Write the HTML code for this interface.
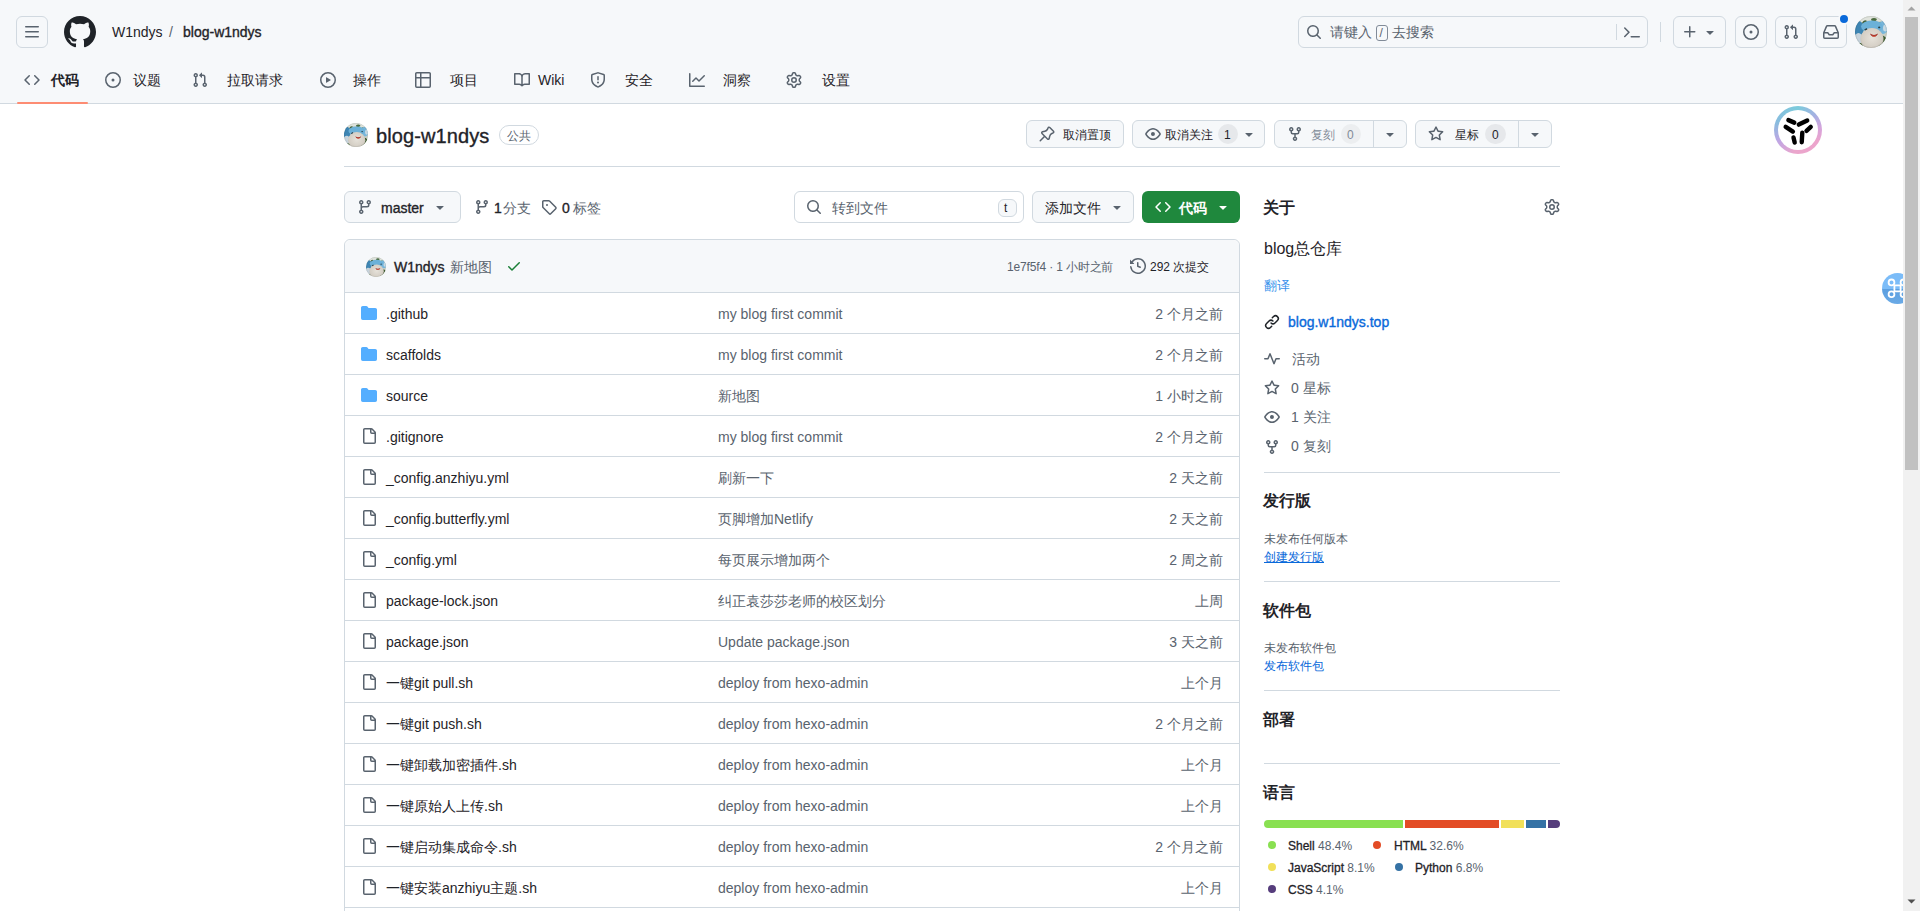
<!DOCTYPE html>
<html><head><meta charset="utf-8"><title>blog-w1ndys</title>
<style>
html,body{margin:0;padding:0;width:1920px;height:911px;overflow:hidden;background:#fff;}
body{font-family:"Liberation Sans",sans-serif;position:relative;-webkit-font-smoothing:antialiased;}
.b{position:absolute;box-sizing:content-box;}
.t{position:absolute;white-space:nowrap;margin-top:1px;}
.ic{position:absolute;overflow:visible;}
</style></head><body>
<div class="b" style="left:0px;top:0px;width:1903px;height:103px;background:#f6f8fa;border-bottom:1px solid #d1d9e0"></div>
<div class="b" style="left:16px;top:16px;width:30px;height:30px;border:1px solid #d1d9e0;border-radius:6px"></div>
<svg class="ic" style="left:24px;top:24px;width:16px;height:16px;fill:#59636e;" viewBox="0 0 16 16"><path d="M1 2.750A.75.75 0 0 1 1.750 2h12.500a.75.75 0 0 1 0 1.500H1.750A.75.75 0 0 1 1 2.750Zm0 5A.75.75 0 0 1 1.750 7h12.500a.75.75 0 0 1 0 1.500H1.750A.75.75 0 0 1 1 7.750ZM1.750 12h12.500a.75.75 0 0 1 0 1.500H1.750a.75.75 0 0 1 0-1.500Z"/></svg>
<svg class="ic" style="left:64px;top:16px;width:32px;height:32px;fill:#1f2328;" viewBox="1 1 22 22"><path d="M12 1C5.923 1 1 5.923 1 12c0 4.867 3.149 8.979 7.521 10.436.550.096.756-.233.756-.522 0-.262-.013-1.128-.013-2.049-2.764.509-3.479-.674-3.699-1.292-.124-.317-.660-1.293-1.128-1.554-.385-.207-.936-.715-.014-.729.866-.014 1.485.797 1.691 1.128.990 1.663 2.571 1.196 3.204.907.096-.715.385-1.196.701-1.471-2.448-.275-5.005-1.224-5.005-5.432 0-1.196.426-2.186 1.128-2.956-.110-.275-.495-1.402.110-2.915 0 0 .921-.288 3.024 1.128a10.193 10.193 0 0 1 2.750-.371c.936 0 1.871.123 2.750.371 2.104-1.430 3.025-1.128 3.025-1.128.605 1.513.220 2.640.110 2.915.701.770 1.127 1.747 1.127 2.956 0 4.222-2.571 5.157-5.019 5.432.399.344.743 1.004.743 2.035 0 1.471-.014 2.654-.014 3.025 0 .289.206.632.756.522C19.851 20.979 23 16.854 23 12c0-6.077-4.922-11-11-11Z"/></svg>
<div class="t" style="left:112px;top:21px;font-size:14px;color:#1f2328;font-weight:400;line-height:20px">W1ndys</div>
<div class="t" style="left:169px;top:21px;font-size:14px;color:#59636e;font-weight:400;line-height:20px">/</div>
<div class="t" style="left:183px;top:21px;font-size:14px;color:#1f2328;font-weight:400;line-height:20px;-webkit-text-stroke:0.35px #1f2328">blog-w1ndys</div>
<div class="b" style="left:1298px;top:16px;width:348px;height:30px;border:1px solid #d1d9e0;border-radius:6px;background:#f6f8fa"></div>
<svg class="ic" style="left:1306px;top:24px;width:16px;height:16px;fill:#59636e;" viewBox="0 0 16 16"><path d="M10.68 11.74a6 6 0 0 1-7.922-8.982 6 6 0 0 1 8.982 7.922l3.04 3.04a.749.749 0 0 1-.326 1.275.749.749 0 0 1-.734-.215ZM11.5 7a4.499 4.499 0 1 0-8.997 0A4.499 4.499 0 0 0 11.5 7Z"/></svg>
<div class="t" style="left:1330px;top:21px;font-size:14px;color:#59636e;font-weight:400;line-height:20px">请键入</div>
<div class="b" style="left:1376px;top:25px;width:10px;height:14px;border:1px solid #818b98;border-radius:3px"></div>
<div class="t" style="left:1379.5px;top:24px;font-size:12px;color:#59636e;font-weight:400;line-height:16px">/</div>
<div class="t" style="left:1392px;top:21px;font-size:14px;color:#59636e;font-weight:400;line-height:20px">去搜索</div>
<div class="b" style="left:1616px;top:24px;width:1px;height:16px;background:#d1d9e0"></div>
<svg class="ic" style="left:1624px;top:24px;width:16px;height:16px;fill:#59636e;" viewBox="0 0 16 16"><path d="M.22 2.97a.75.75 0 0 1 1.06 0l4.25 4.25a.75.75 0 0 1 0 1.06l-4.25 4.25a.749.749 0 0 1-1.275-.326.749.749 0 0 1 .215-.734L3.94 7.75.22 4.03a.75.75 0 0 1 0-1.06ZM6.5 12.25a.75.75 0 0 1 .75-.75h8a.75.75 0 0 1 0 1.5h-8a.75.75 0 0 1-.75-.75Z" transform="translate(0,0.5)"/></svg>
<div class="b" style="left:1660px;top:22px;width:1px;height:20px;background:#d1d9e0"></div>
<div class="b" style="left:1673px;top:16px;width:51px;height:30px;border:1px solid #d1d9e0;border-radius:6px"></div>
<svg class="ic" style="left:1682px;top:24px;width:16px;height:16px;fill:#59636e;" viewBox="0 0 16 16"><path d="M7.75 2a.75.75 0 0 1 .75.75V7h4.25a.75.75 0 0 1 0 1.5H8.5v4.25a.75.75 0 0 1-1.5 0V8.5H2.75a.75.75 0 0 1 0-1.5H7V2.75A.75.75 0 0 1 7.75 2Z"/></svg>
<svg class="ic" style="left:1702px;top:24px;width:16px;height:16px;fill:#59636e;" viewBox="0 0 16 16"><path d="m4.427 7.427 3.396 3.396a.25.25 0 0 0 .354 0l3.396-3.396A.25.25 0 0 0 11.396 7H4.604a.25.25 0 0 0-.177.427Z"/></svg>
<div class="b" style="left:1735px;top:16px;width:30px;height:30px;border:1px solid #d1d9e0;border-radius:6px"></div>
<svg class="ic" style="left:1743px;top:24px;width:16px;height:16px;fill:#59636e;" viewBox="0 0 16 16"><path d="M8 9.5a1.5 1.5 0 1 0 0-3 1.5 1.5 0 0 0 0 3Z"/><path d="M8 0a8 8 0 1 1 0 16A8 8 0 0 1 8 0ZM1.5 8a6.5 6.5 0 1 0 13 0 6.5 6.5 0 0 0-13 0Z"/></svg>
<div class="b" style="left:1775px;top:16px;width:30px;height:30px;border:1px solid #d1d9e0;border-radius:6px"></div>
<svg class="ic" style="left:1783px;top:24px;width:16px;height:16px;fill:#59636e;" viewBox="0 0 16 16"><path d="M1.5 3.25a2.25 2.25 0 1 1 3 2.122v5.256a2.251 2.251 0 1 1-1.5 0V5.372A2.25 2.25 0 0 1 1.5 3.25Zm5.677-.177L9.573.677A.25.25 0 0 1 10 .854V2.5h1A2.5 2.5 0 0 1 13.5 5v5.628a2.251 2.251 0 1 1-1.5 0V5a1 1 0 0 0-1-1h-1v1.646a.25.25 0 0 1-.427.177L7.177 3.427a.25.25 0 0 1 0-.354ZM3.75 2.5a.75.75 0 1 0 0 1.5.75.75 0 0 0 0-1.5Zm0 9.5a.75.75 0 1 0 0 1.5.75.75 0 0 0 0-1.5Zm8.25.75a.75.75 0 1 0 1.5 0 .75.75 0 0 0-1.5 0Z"/></svg>
<div class="b" style="left:1815px;top:16px;width:30px;height:30px;border:1px solid #d1d9e0;border-radius:6px"></div>
<svg class="ic" style="left:1823px;top:24px;width:16px;height:16px;fill:#59636e;" viewBox="0 0 16 16"><path d="M2.8 2.06A1.75 1.75 0 0 1 4.41 1h7.18c.7 0 1.333.417 1.61 1.06l2.74 6.395c.04.093.06.194.06.295v4.5A1.75 1.75 0 0 1 14.25 15H1.75A1.75 1.75 0 0 1 0 13.25v-4.5c0-.101.02-.202.06-.295Zm1.61.44a.25.25 0 0 0-.23.152L1.887 8H4.75a.75.75 0 0 1 .6.3L6.625 10h2.75l1.275-1.7a.75.75 0 0 1 .6-.3h2.863L11.82 2.652a.25.25 0 0 0-.23-.152Zm10.09 7h-2.875l-1.275 1.7a.75.75 0 0 1-.6.3h-3.5a.75.75 0 0 1-.6-.3L4.375 9.5H1.5v3.75c0 .138.112.25.25.25h12.5a.25.25 0 0 0 .25-.25Z"/></svg>
<div class="b" style="left:1840px;top:15px;width:8px;height:8px;background:#0969da;border-radius:50%;border:2px solid #f6f8fa;left:1838px;top:13px"></div>
<svg width="0" height="0" style="position:absolute"><defs><clipPath id="avc"><circle cx="16" cy="16" r="16"/></clipPath>
<radialGradient id="avface" cx="0.5" cy="0.45" r="0.6"><stop offset="0" stop-color="#e6e2da"/><stop offset="0.75" stop-color="#d4cec4"/><stop offset="1" stop-color="#b8b1a6"/></radialGradient>
<symbol id="av" viewBox="0 0 32 32"><g clip-path="url(#avc)">
<rect width="32" height="32" fill="#c9d0c6"/>
<path d="M0 0H32V10C27 6 22 4 16 4.5C9 4 4 7 0 10Z" fill="#dfe3dc"/>
<path d="M7 7Q9 3 12 5Q11 8 8 9Z" fill="#3f5e36"/><path d="M16 3Q19 1 22 3Q21 6 17 6Z" fill="#4a6a3e"/><path d="M24 6Q27 5 28 8L25 9Z" fill="#557a48"/>
<ellipse cx="3.5" cy="12.5" rx="5.5" ry="7.5" fill="#3d85b3"/>
<ellipse cx="28" cy="11.5" rx="5" ry="6.5" fill="#78b6da"/>
<ellipse cx="30.5" cy="12" rx="2.5" ry="3.5" fill="#c9dbe4"/>
<ellipse cx="17" cy="10.5" rx="11" ry="6" fill="#6cb1d8"/>
<ellipse cx="27" cy="26" rx="5" ry="6.5" fill="#3d5c2e"/>
<ellipse cx="3.5" cy="22.5" rx="4" ry="5.5" fill="#c6d3dc"/>
<ellipse cx="5" cy="30" rx="3" ry="3" fill="#40602f"/>
<ellipse cx="17" cy="23" rx="11.5" ry="11" fill="url(#avface)"/>
<path d="M15 17.6 Q19 20.2 23 17.6 Q22.2 20.6 19 20.9 Q15.8 20.6 15 17.6Z" fill="#9e2a22"/>
<path d="M16.3 19.2 Q19 20.5 21.7 19.2 Q20.4 20.7 19 20.7Q17.6 20.7 16.3 19.2Z" fill="#e46c52"/>
<path d="M9.2 13.6L11.6 11.9L12.4 13.4L10.2 14.6Z" fill="#2a4048"/><ellipse cx="24.2" cy="11.4" rx="1.1" ry="0.9" fill="#2a4048"/>
</g><circle cx="16" cy="16" r="15.6" fill="none" stroke="rgba(31,35,40,0.12)" stroke-width="0.8"/></symbol></defs></svg>
<svg class="ic" style="left:1855px;top:16px;width:32px;height:32px" viewBox="0 0 32 32"><use href="#av"/></svg>
<svg class="ic" style="left:24px;top:72px;width:16px;height:16px;fill:#59636e;" viewBox="0 0 16 16"><path d="m11.28 3.22 4.25 4.25a.75.75 0 0 1 0 1.06l-4.25 4.25a.749.749 0 0 1-1.275-.326.749.749 0 0 1 .215-.734L13.94 8l-3.72-3.72a.749.749 0 0 1 .326-1.275.749.749 0 0 1 .734.215Zm-6.56 0a.751.751 0 0 1 1.042.018.751.751 0 0 1 .018 1.042L2.06 8l3.72 3.72a.749.749 0 0 1-.326 1.275.749.749 0 0 1-.734-.215L.47 8.53a.75.75 0 0 1 0-1.06Z"/></svg>
<div class="t" style="left:51px;top:69px;font-size:14px;color:#1f2328;font-weight:600;line-height:20px">代码</div>
<svg class="ic" style="left:105px;top:72px;width:16px;height:16px;fill:#59636e;" viewBox="0 0 16 16"><path d="M8 9.5a1.5 1.5 0 1 0 0-3 1.5 1.5 0 0 0 0 3Z"/><path d="M8 0a8 8 0 1 1 0 16A8 8 0 0 1 8 0ZM1.5 8a6.5 6.5 0 1 0 13 0 6.5 6.5 0 0 0-13 0Z"/></svg>
<div class="t" style="left:133px;top:69px;font-size:14px;color:#1f2328;font-weight:400;line-height:20px">议题</div>
<svg class="ic" style="left:192px;top:72px;width:16px;height:16px;fill:#59636e;" viewBox="0 0 16 16"><path d="M1.5 3.25a2.25 2.25 0 1 1 3 2.122v5.256a2.251 2.251 0 1 1-1.5 0V5.372A2.25 2.25 0 0 1 1.5 3.25Zm5.677-.177L9.573.677A.25.25 0 0 1 10 .854V2.5h1A2.5 2.5 0 0 1 13.5 5v5.628a2.251 2.251 0 1 1-1.5 0V5a1 1 0 0 0-1-1h-1v1.646a.25.25 0 0 1-.427.177L7.177 3.427a.25.25 0 0 1 0-.354ZM3.75 2.5a.75.75 0 1 0 0 1.5.75.75 0 0 0 0-1.5Zm0 9.5a.75.75 0 1 0 0 1.5.75.75 0 0 0 0-1.5Zm8.25.75a.75.75 0 1 0 1.5 0 .75.75 0 0 0-1.5 0Z"/></svg>
<div class="t" style="left:227px;top:69px;font-size:14px;color:#1f2328;font-weight:400;line-height:20px">拉取请求</div>
<svg class="ic" style="left:320px;top:72px;width:16px;height:16px;fill:#59636e;" viewBox="0 0 16 16"><path d="M8 0a8 8 0 1 1 0 16A8 8 0 0 1 8 0ZM1.5 8a6.5 6.5 0 1 0 13 0 6.5 6.5 0 0 0-13 0Zm4.879-2.773 4.264 2.559a.25.25 0 0 1 0 .428l-4.264 2.559A.25.25 0 0 1 6 10.559V5.442a.25.25 0 0 1 .379-.215Z"/></svg>
<div class="t" style="left:353px;top:69px;font-size:14px;color:#1f2328;font-weight:400;line-height:20px">操作</div>
<svg class="ic" style="left:415px;top:72px;width:16px;height:16px;fill:#59636e;" viewBox="0 0 16 16"><path d="M0 1.75C0 .784.784 0 1.75 0h12.5C15.216 0 16 .784 16 1.75v12.5A1.75 1.75 0 0 1 14.25 16H1.75A1.75 1.75 0 0 1 0 14.25ZM6.5 6.5v8h7.75a.25.25 0 0 0 .25-.25V6.5Zm8-1.5V1.750a.25.25 0 0 0-.25-.25H6.5V5Zm-13 1.5v7.75c0 .138.112.25.25.25H5v-8ZM5 5V1.5H1.75a.25.25 0 0 0-.25.25V5Z"/></svg>
<div class="t" style="left:450px;top:69px;font-size:14px;color:#1f2328;font-weight:400;line-height:20px">项目</div>
<svg class="ic" style="left:514px;top:72px;width:16px;height:16px;fill:#59636e;" viewBox="0 0 16 16"><path d="M0 1.75A.75.75 0 0 1 .75 1h4.253c1.227 0 2.317.59 3 1.501A3.743 3.743 0 0 1 11.006 1h4.245a.75.75 0 0 1 .75.75v10.5a.75.75 0 0 1-.75.75h-4.507a2.25 2.25 0 0 0-1.591.659l-.622.621a.75.75 0 0 1-1.06 0l-.622-.621A2.25 2.25 0 0 0 5.258 13H.75a.75.75 0 0 1-.75-.75Zm7.251 10.324.004-5.073-.002-2.253A2.25 2.25 0 0 0 5.003 2.5H1.5v9h3.757a3.75 3.75 0 0 1 1.994.574ZM8.755 4.75l-.004 7.322a3.752 3.752 0 0 1 1.992-.572H14.5v-9h-3.495a2.25 2.250 0 0 0-2.250 2.25Z"/></svg>
<div class="t" style="left:538px;top:69px;font-size:14px;color:#1f2328;font-weight:400;line-height:20px">Wiki</div>
<svg class="ic" style="left:590px;top:72px;width:16px;height:16px;fill:#59636e;" viewBox="0 0 16 16"><path d="M7.467.133a1.748 1.748 0 0 1 1.066 0l5.25 1.68A1.75 1.75 0 0 1 15 3.48V7c0 1.566-.32 3.182-1.303 4.682-.983 1.498-2.585 2.813-5.032 3.855a1.697 1.697 0 0 1-1.33 0c-2.447-1.042-4.049-2.357-5.032-3.855C1.32 10.182 1 8.566 1 7V3.48a1.755 1.755 0 0 1 1.217-1.667Zm.61 1.429a.25.25 0 0 0-.153 0l-5.25 1.68a.25.25 0 0 0-.174.238V7c0 1.358.275 2.666 1.057 3.86.784 1.194 2.121 2.34 4.366 3.297a.196.196 0 0 0 .154 0c2.245-.956 3.582-2.104 4.366-3.298C13.225 9.666 13.5 8.36 13.5 7V3.48a.251.251 0 0 0-.174-.237l-5.25-1.68ZM8.750 4.75v3a.75.75 0 0 1-1.5 0v-3a.75.75 0 0 1 1.5 0ZM9 10.5a1 1 0 1 1-2 0 1 1 0 0 1 2 0Z"/></svg>
<div class="t" style="left:625px;top:69px;font-size:14px;color:#1f2328;font-weight:400;line-height:20px">安全</div>
<svg class="ic" style="left:689px;top:72px;width:16px;height:16px;fill:#59636e;" viewBox="0 0 16 16"><path d="M1.5 1.75V13.5h13.75a.75.75 0 0 1 0 1.5H.75a.75.75 0 0 1-.75-.75V1.75a.75.75 0 0 1 1.5 0Zm14.28 2.53-5.25 5.25a.75.75 0 0 1-1.06 0L7 7.060 4.28 9.78a.751.751 0 0 1-1.042-.018.751.751 0 0 1-.018-1.042l3.25-3.25a.75.75 0 0 1 1.060 0L10 7.94l4.72-4.72a.751.751 0 0 1 1.042.018.751.751 0 0 1 .018 1.042Z"/></svg>
<div class="t" style="left:723px;top:69px;font-size:14px;color:#1f2328;font-weight:400;line-height:20px">洞察</div>
<svg class="ic" style="left:786px;top:72px;width:16px;height:16px;fill:#59636e;" viewBox="0 0 16 16"><path d="M8 0a8.2 8.2 0 0 1 .701.031C9.444.095 9.99.645 10.16 1.29l.288 1.107c.018.066.079.158.212.224.231.114.454.243.668.386.123.082.233.09.299.071l1.103-.303c.644-.176 1.392.021 1.82.63.27.385.506.792.704 1.218.315.675.111 1.422-.364 1.891l-.814.806c-.049.048-.098.147-.088.294.016.257.016.515 0 .772-.01.147.038.246.088.294l.814.806c.475.469.679 1.216.364 1.891a7.977 7.977 0 0 1-.704 1.217c-.428.61-1.176.807-1.82.63l-1.102-.302c-.067-.019-.177-.011-.3.071a5.909 5.909 0 0 1-.668.386c-.133.066-.194.158-.211.224l-.29 1.106c-.168.646-.715 1.196-1.458 1.26a8.006 8.006 0 0 1-1.402 0c-.743-.064-1.289-.614-1.458-1.26l-.289-1.106c-.018-.066-.079-.158-.212-.224a5.738 5.738 0 0 1-.668-.386c-.123-.082-.233-.09-.299-.071l-1.103.303c-.644.176-1.392-.021-1.82-.63a8.12 8.120 0 0 1-.704-1.218c-.315-.675-.111-1.422.363-1.891l.815-.806c.05-.048.098-.147.088-.294a6.214 6.214 0 0 1 0-.772c.01-.147-.038-.246-.088-.294l-.815-.806C.635 6.045.431 5.298.746 4.623a7.92 7.92 0 0 1 .704-1.217c.428-.61 1.176-.807 1.82-.63l1.102.302c.067.019.177.011.3-.071.214-.143.437-.272.668-.386.133-.066.194-.158.211-.224l.29-1.106C6.009.645 6.556.095 7.299.03 7.53.01 7.764 0 8 0Zm-.571 1.525c-.036.003-.108.036-.137.146l-.289 1.105c-.147.561-.549.967-.998 1.189-.173.086-.34.183-.5.29-.417.278-.97.423-1.529.27l-1.103-.303c-.109-.03-.175.016-.195.045-.22.312-.412.644-.573.99-.014.031-.021.11.059.19l.815.806c.411.406.562.957.53 1.456a4.709 4.709 0 0 0 0 .582c.032.499-.119 1.05-.53 1.456l-.815.806c-.081.08-.073.159-.059.19.162.346.353.677.573.989.02.03.085.076.195.046l1.102-.303c.56-.153 1.113-.008 1.53.27.161.107.328.204.501.29.447.222.85.629.997 1.189l.289 1.105c.029.109.101.143.137.146a6.6 6.6 0 0 0 1.142 0c.036-.003.108-.036.137-.146l.289-1.105c.147-.561.549-.967.998-1.189.173-.086.34-.183.5-.29.417-.278.97-.423 1.529-.27l1.103.303c.109.029.175-.016.195-.045.22-.313.411-.644.573-.99.014-.031.021-.11-.059-.19l-.815-.806c-.411-.406-.562-.957-.53-1.456a4.709 4.709 0 0 0 0-.582c-.032-.499.119-1.05.53-1.456l.815-.806c.081-.08.073-.159.059-.19a6.464 6.464 0 0 0-.573-.989c-.02-.03-.085-.076-.195-.046l-1.102.303c-.56.153-1.113.008-1.53-.27a4.44 4.44 0 0 0-.501-.29c-.447-.222-.85-.629-.997-1.189l-.289-1.105c-.029-.11-.101-.143-.137-.146a6.6 6.6 0 0 0-1.142 0ZM11 8a3 3 0 1 1-6 0 3 3 0 0 1 6 0ZM9.5 8a1.5 1.5 0 1 0-3.001.001A1.5 1.5 0 0 0 9.5 8Z"/></svg>
<div class="t" style="left:822px;top:69px;font-size:14px;color:#1f2328;font-weight:400;line-height:20px">设置</div>
<div class="b" style="left:17px;top:102px;width:71px;height:2px;background:#fd8c73;border-radius:6px"></div>
<svg class="ic" style="left:344px;top:123px;width:24px;height:24px" viewBox="0 0 32 32"><use href="#av"/></svg>
<div class="t" style="left:376px;top:120px;font-size:20px;color:#1f2328;font-weight:400;line-height:30px;letter-spacing:0.1px;-webkit-text-stroke:0.35px #1f2328">blog-w1ndys</div>
<div class="b" style="left:499px;top:125px;width:38px;height:18px;border:1px solid #d1d9e0;border-radius:2em"></div>
<div class="t" style="left:507px;top:126px;font-size:12px;color:#59636e;font-weight:500;line-height:18px">公共</div>
<div class="b" style="left:1026px;top:120px;width:96px;height:26px;border:1px solid #d1d9e0;border-radius:6px;background:#f6f8fa;"></div>
<svg class="ic" style="left:1039px;top:126px;width:16px;height:16px;fill:#59636e;" viewBox="0 0 16 16"><path d="m11.294.984 3.722 3.722a1.75 1.75 0 0 1-.504 2.826l-1.327.613a3.089 3.089 0 0 0-1.707 2.084l-.584 2.454c-.317 1.332-1.972 1.8-2.94.832L5.75 11.311 1.78 15.28a.749.749 0 1 1-1.06-1.06l3.969-3.97-2.204-2.204c-.968-.968-.5-2.623.832-2.94l2.454-.584a3.08 3.080 0 0 0 2.084-1.707l.613-1.327a1.75 1.75 0 0 1 2.826-.504ZM6.283 9.723l2.732 2.731a.25.25 0 0 0 .42-.119l.584-2.454a4.586 4.586 0 0 1 2.537-3.098l1.328-.613a.25.25 0 0 0 .072-.404l-3.722-3.722a.25.25 0 0 0-.404.072l-.614 1.328a4.584 4.584 0 0 1-3.098 2.537l-2.454.584a.25.25 0 0 0-.119.42l2.731 2.732Z"/></svg>
<div class="t" style="left:1063px;top:124px;font-size:12px;color:#1f2328;font-weight:500;line-height:20px">取消置顶</div>
<div class="b" style="left:1132px;top:120px;width:131px;height:26px;border:1px solid #d1d9e0;border-radius:6px;background:#f6f8fa;"></div>
<svg class="ic" style="left:1145px;top:126px;width:16px;height:16px;fill:#59636e;" viewBox="0 0 16 16"><path d="M8 2c1.981 0 3.671.992 4.933 2.078 1.270 1.091 2.187 2.345 2.637 3.023a1.620 1.620 0 0 1 0 1.798c-.45.678-1.367 1.932-2.637 3.023C11.670 13.008 9.981 14 8 14c-1.981 0-3.671-.992-4.933-2.078C1.797 10.830.880 9.576.430 8.898a1.620 1.620 0 0 1 0-1.798c.45-.677 1.367-1.931 2.637-3.022C4.330 2.992 6.019 2 8 2ZM1.679 7.932a.12.12 0 0 0 0 .136c.411.622 1.241 1.750 2.366 2.717C5.176 11.758 6.527 12.500 8 12.500c1.473 0 2.825-.742 3.955-1.715 1.124-.967 1.954-2.096 2.366-2.717a.12.12 0 0 0 0-.136c-.412-.621-1.242-1.750-2.366-2.717C10.824 4.242 9.473 3.500 8 3.500c-1.473 0-2.825.742-3.955 1.715-1.124.967-1.954 2.096-2.366 2.717ZM8 10a2 2 0 1 1-.001-3.999A2 2 0 0 1 8 10Z"/></svg>
<div class="t" style="left:1165px;top:124px;font-size:12px;color:#1f2328;font-weight:500;line-height:20px">取消关注</div>
<div class="b" style="left:1218px;top:124px;width:20px;height:20px;background:#e6e8eb;border-radius:2em"></div>
<div class="t" style="left:1224px;top:124px;font-size:12px;color:#1f2328;font-weight:500;line-height:20px">1</div>
<svg class="ic" style="left:1241px;top:126px;width:16px;height:16px;fill:#59636e;" viewBox="0 0 16 16"><path d="m4.427 7.427 3.396 3.396a.25.25 0 0 0 .354 0l3.396-3.396A.25.25 0 0 0 11.396 7H4.604a.25.25 0 0 0-.177.427Z"/></svg>
<div class="b" style="left:1274px;top:120px;width:131px;height:26px;border:1px solid #d1d9e0;border-radius:6px;background:#f6f8fa;"></div>
<div class="b" style="left:1373px;top:121px;width:1px;height:26px;background:#d1d9e0"></div>
<svg class="ic" style="left:1287px;top:126px;width:16px;height:16px;fill:#59636e;" viewBox="0 0 16 16"><path d="M5 5.372v.878c0 .414.336.75.75.75h4.5a.75.75 0 0 0 .75-.75v-.878a2.25 2.25 0 1 1 1.5 0v.878a2.25 2.25 0 0 1-2.25 2.25h-1.5v2.128a2.251 2.251 0 1 1-1.5 0V8.500h-1.5A2.25 2.25 0 0 1 3.500 6.250v-.878a2.250 2.250 0 1 1 1.500 0ZM5 3.250a.75.75 0 1 0-1.500 0 .75.75 0 0 0 1.500 0Zm6.750.750a.75.75 0 1 0 0-1.500.75.75 0 0 0 0 1.500Zm-3 8.750a.75.75 0 1 0-1.500 0 .75.75 0 0 0 1.500 0Z"/></svg>
<div class="t" style="left:1311px;top:124px;font-size:12px;color:#818b98;font-weight:500;line-height:20px">复刻</div>
<div class="b" style="left:1341px;top:124px;width:20px;height:20px;background:#eceef0;border-radius:2em"></div>
<div class="t" style="left:1347px;top:124px;font-size:12px;color:#818b98;font-weight:500;line-height:20px">0</div>
<svg class="ic" style="left:1382px;top:126px;width:16px;height:16px;fill:#59636e;" viewBox="0 0 16 16"><path d="m4.427 7.427 3.396 3.396a.25.25 0 0 0 .354 0l3.396-3.396A.25.25 0 0 0 11.396 7H4.604a.25.25 0 0 0-.177.427Z"/></svg>
<div class="b" style="left:1415px;top:120px;width:135px;height:26px;border:1px solid #d1d9e0;border-radius:6px;background:#f6f8fa;"></div>
<div class="b" style="left:1518px;top:121px;width:1px;height:26px;background:#d1d9e0"></div>
<svg class="ic" style="left:1428px;top:126px;width:16px;height:16px;fill:#59636e;" viewBox="0 0 16 16"><path d="M8 .25a.75.75 0 0 1 .673.418l1.882 3.815 4.210.612a.75.75 0 0 1 .416 1.279l-3.046 2.970.719 4.192a.751.751 0 0 1-1.088.791L8 12.347l-3.766 1.980a.75.75 0 0 1-1.088-.79l.72-4.194L.818 6.374a.75.75 0 0 1 .416-1.280l4.210-.611L7.327.668A.75.75 0 0 1 8 .25Zm0 2.445L6.615 5.500a.75.75 0 0 1-.564.410l-3.097.450 2.240 2.184a.75.75 0 0 1 .216.664l-.528 3.084 2.769-1.456a.75.75 0 0 1 .698 0l2.770 1.456-.530-3.084a.75.75 0 0 1 .216-.664l2.240-2.183-3.096-.450a.75.75 0 0 1-.564-.410L8 2.694Z"/></svg>
<div class="t" style="left:1455px;top:124px;font-size:12px;color:#1f2328;font-weight:500;line-height:20px">星标</div>
<div class="b" style="left:1485px;top:124px;width:21px;height:20px;background:#e6e8eb;border-radius:2em"></div>
<div class="t" style="left:1492px;top:124px;font-size:12px;color:#1f2328;font-weight:500;line-height:20px">0</div>
<svg class="ic" style="left:1527px;top:126px;width:16px;height:16px;fill:#59636e;" viewBox="0 0 16 16"><path d="m4.427 7.427 3.396 3.396a.25.25 0 0 0 .354 0l3.396-3.396A.25.25 0 0 0 11.396 7H4.604a.25.25 0 0 0-.177.427Z"/></svg>
<div class="b" style="left:344px;top:166px;width:1216px;height:1px;background:#d1d9e0"></div>
<div class="b" style="left:344px;top:191px;width:115px;height:30px;border:1px solid #d1d9e0;border-radius:6px;background:#f6f8fa"></div>
<svg class="ic" style="left:357px;top:199px;width:16px;height:16px;fill:#59636e;" viewBox="0 0 16 16"><path d="M9.5 3.25a2.25 2.25 0 1 1 3 2.122V6A2.5 2.5 0 0 1 10 8.500H6a1 1 0 0 0-1 1v1.128a2.251 2.251 0 1 1-1.500 0V5.372a2.250 2.250 0 1 1 1.500 0v1.836A2.493 2.493 0 0 1 6 7h4a1 1 0 0 0 1-1v-.628A2.250 2.250 0 0 1 9.500 3.250Zm-6 0a.75.75 0 1 0 1.500 0 .75.75 0 0 0-1.500 0Zm8.250-.750a.75.75 0 1 0 0 1.500.75.75 0 0 0 0-1.500ZM4.250 12a.75.75 0 1 0 0 1.500.75.75 0 0 0 0-1.500Z"/></svg>
<div class="t" style="left:381px;top:197px;font-size:14px;color:#1f2328;font-weight:400;line-height:20px;-webkit-text-stroke:0.35px #1f2328">master</div>
<svg class="ic" style="left:432px;top:199px;width:16px;height:16px;fill:#59636e;" viewBox="0 0 16 16"><path d="m4.427 7.427 3.396 3.396a.25.25 0 0 0 .354 0l3.396-3.396A.25.25 0 0 0 11.396 7H4.604a.25.25 0 0 0-.177.427Z"/></svg>
<svg class="ic" style="left:474px;top:199px;width:16px;height:16px;fill:#59636e;" viewBox="0 0 16 16"><path d="M9.5 3.25a2.25 2.25 0 1 1 3 2.122V6A2.5 2.5 0 0 1 10 8.500H6a1 1 0 0 0-1 1v1.128a2.251 2.251 0 1 1-1.500 0V5.372a2.250 2.250 0 1 1 1.500 0v1.836A2.493 2.493 0 0 1 6 7h4a1 1 0 0 0 1-1v-.628A2.250 2.250 0 0 1 9.500 3.250Zm-6 0a.75.75 0 1 0 1.500 0 .75.75 0 0 0-1.500 0Zm8.250-.750a.75.75 0 1 0 0 1.500.75.75 0 0 0 0-1.500ZM4.250 12a.75.75 0 1 0 0 1.500.75.75 0 0 0 0-1.500Z"/></svg>
<div class="t" style="left:494px;top:197px;font-size:14px;color:#1f2328;font-weight:400;line-height:20px;-webkit-text-stroke:0.35px #1f2328">1</div>
<div class="t" style="left:503px;top:197px;font-size:14px;color:#59636e;font-weight:400;line-height:20px">分支</div>
<svg class="ic" style="left:541px;top:199px;width:16px;height:16px;fill:#59636e;" viewBox="0 0 16 16"><path d="M1 7.775V2.750C1 1.784 1.784 1 2.750 1h5.025c.464 0 .910.184 1.238.513l6.250 6.250a1.750 1.750 0 0 1 0 2.474l-5.026 5.026a1.750 1.750 0 0 1-2.474 0l-6.250-6.250A1.752 1.752 0 0 1 1 7.775Zm1.500 0c0 .066.026.130.073.177l6.250 6.250a.25.25 0 0 0 .354 0l5.025-5.025a.25.25 0 0 0 0-.354l-6.250-6.250a.25.25 0 0 0-.177-.073H2.750a.25.25 0 0 0-.25.25ZM6 5a1 1 0 1 1 0 2 1 1 0 0 1 0-2Z"/></svg>
<div class="t" style="left:562px;top:197px;font-size:14px;color:#1f2328;font-weight:400;line-height:20px;-webkit-text-stroke:0.35px #1f2328">0</div>
<div class="t" style="left:573px;top:197px;font-size:14px;color:#59636e;font-weight:400;line-height:20px">标签</div>
<div class="b" style="left:794px;top:191px;width:228px;height:30px;border:1px solid #d1d9e0;border-radius:6px;background:#fff"></div>
<svg class="ic" style="left:806px;top:199px;width:16px;height:16px;fill:#59636e;" viewBox="0 0 16 16"><path d="M10.68 11.74a6 6 0 0 1-7.922-8.982 6 6 0 0 1 8.982 7.922l3.04 3.04a.749.749 0 0 1-.326 1.275.749.749 0 0 1-.734-.215ZM11.5 7a4.499 4.499 0 1 0-8.997 0A4.499 4.499 0 0 0 11.5 7Z"/></svg>
<div class="t" style="left:832px;top:197px;font-size:14px;color:#59636e;font-weight:400;line-height:20px">转到文件</div>
<div class="b" style="left:998px;top:199px;width:17px;height:16px;border:1px solid #d1d9e0;border-radius:6px;background:#f6f8fa"></div>
<div class="t" style="left:1004px;top:199px;font-size:12px;color:#1f2328;font-weight:400;line-height:16px">t</div>
<div class="b" style="left:1032px;top:191px;width:100px;height:30px;border:1px solid #d1d9e0;border-radius:6px;background:#f6f8fa"></div>
<div class="t" style="left:1045px;top:197px;font-size:14px;color:#1f2328;font-weight:500;line-height:20px">添加文件</div>
<svg class="ic" style="left:1109px;top:199px;width:16px;height:16px;fill:#59636e;" viewBox="0 0 16 16"><path d="m4.427 7.427 3.396 3.396a.25.25 0 0 0 .354 0l3.396-3.396A.25.25 0 0 0 11.396 7H4.604a.25.25 0 0 0-.177.427Z"/></svg>
<div class="b" style="left:1142px;top:191px;width:98px;height:32px;background:#1f883d;border-radius:6px"></div>
<svg class="ic" style="left:1155px;top:199px;width:16px;height:16px;fill:#fff;" viewBox="0 0 16 16"><path d="m11.28 3.22 4.25 4.25a.75.75 0 0 1 0 1.06l-4.25 4.25a.749.749 0 0 1-1.275-.326.749.749 0 0 1 .215-.734L13.94 8l-3.72-3.72a.749.749 0 0 1 .326-1.275.749.749 0 0 1 .734.215Zm-6.56 0a.751.751 0 0 1 1.042.018.751.751 0 0 1 .018 1.042L2.06 8l3.72 3.72a.749.749 0 0 1-.326 1.275.749.749 0 0 1-.734-.215L.47 8.53a.75.75 0 0 1 0-1.06Z"/></svg>
<div class="t" style="left:1179px;top:197px;font-size:14px;color:#fff;font-weight:600;line-height:20px">代码</div>
<svg class="ic" style="left:1215px;top:199px;width:16px;height:16px;fill:#fff;" viewBox="0 0 16 16"><path d="m4.427 7.427 3.396 3.396a.25.25 0 0 0 .354 0l3.396-3.396A.25.25 0 0 0 11.396 7H4.604a.25.25 0 0 0-.177.427Z"/></svg>
<div class="b" style="left:344px;top:239px;width:894px;height:1000px;border:1px solid #d1d9e0;border-radius:6px;background:#fff"></div>
<div class="b" style="left:345px;top:240px;width:894px;height:52px;background:#f6f8fa;border-bottom:1px solid #d1d9e0;border-radius:6px 6px 0 0"></div>
<svg class="ic" style="left:366px;top:257px;width:20px;height:20px" viewBox="0 0 32 32"><use href="#av"/></svg>
<div class="t" style="left:394px;top:256px;font-size:14px;color:#1f2328;font-weight:400;line-height:20px;-webkit-text-stroke:0.35px #1f2328">W1ndys</div>
<div class="t" style="left:450px;top:256px;font-size:14px;color:#59636e;font-weight:400;line-height:20px">新地图</div>
<svg class="ic" style="left:506px;top:258px;width:16px;height:16px;fill:#1a7f37;" viewBox="0 0 16 16"><path d="M13.780 4.220a.75.75 0 0 1 0 1.060l-7.250 7.250a.75.75 0 0 1-1.060 0L2.220 9.280a.751.751 0 0 1 .018-1.042.751.751 0 0 1 1.042-.018L6 10.940l6.720-6.720a.75.75 0 0 1 1.060 0Z"/></svg>
<div class="t" style="left:1007px;top:256px;font-size:12px;color:#59636e;font-weight:400;line-height:20px;letter-spacing:-0.15px">1e7f5f4 · 1 小时之前</div>
<svg class="ic" style="left:1130px;top:258px;width:16px;height:16px;fill:#59636e;" viewBox="0 0 16 16"><path d="m.427 1.927 1.215 1.215a8.002 8.002 0 1 1-1.600 5.685.75.75 0 1 1 1.493-.154 6.500 6.500 0 1 0 1.180-4.458l1.358 1.358A.25.25 0 0 1 3.896 6H.250A.25.25 0 0 1 0 5.750V2.104a.25.25 0 0 1 .427-.177ZM7.750 4a.75.75 0 0 1 .750.750v2.992l2.028.812a.75.75 0 0 1-.557 1.392l-2.500-1A.751.751 0 0 1 7 8.250v-3.500A.75.75 0 0 1 7.750 4Z"/></svg>
<div class="t" style="left:1150px;top:256px;font-size:12px;color:#1f2328;font-weight:400;line-height:20px">292 次提交</div>
<div class="b" style="left:345px;top:333px;width:894px;height:1px;background:#d1d9e0"></div>
<svg class="ic" style="left:361px;top:305px;width:16px;height:16px;fill:#54aeff;" viewBox="0 0 16 16"><path d="M.513 1.513A1.750 1.750 0 0 1 1.750 1h3.500c.550 0 1.070.259 1.400.700l.900 1.200a.25.25 0 0 0 .200.100H14.250c.966 0 1.750.784 1.750 1.750v8.500A1.750 1.750 0 0 1 14.250 15H1.750A1.750 1.750 0 0 1 0 13.250V2.750c0-.464.184-.910.513-1.237Z"/></svg>
<div class="t" style="left:386px;top:303px;font-size:14px;color:#1f2328;font-weight:400;line-height:20px">.github</div>
<div class="t" style="left:718px;top:303px;font-size:14px;color:#59636e;font-weight:400;line-height:20px">my blog first commit</div>
<div class="t" style="left:1023px;top:303px;font-size:14px;color:#59636e;font-weight:400;line-height:20px;width:200px;text-align:right">2 个月之前</div>
<div class="b" style="left:345px;top:374px;width:894px;height:1px;background:#d1d9e0"></div>
<svg class="ic" style="left:361px;top:346px;width:16px;height:16px;fill:#54aeff;" viewBox="0 0 16 16"><path d="M.513 1.513A1.750 1.750 0 0 1 1.750 1h3.500c.550 0 1.070.259 1.400.700l.900 1.200a.25.25 0 0 0 .200.100H14.250c.966 0 1.750.784 1.750 1.750v8.500A1.750 1.750 0 0 1 14.250 15H1.750A1.750 1.750 0 0 1 0 13.250V2.750c0-.464.184-.910.513-1.237Z"/></svg>
<div class="t" style="left:386px;top:344px;font-size:14px;color:#1f2328;font-weight:400;line-height:20px">scaffolds</div>
<div class="t" style="left:718px;top:344px;font-size:14px;color:#59636e;font-weight:400;line-height:20px">my blog first commit</div>
<div class="t" style="left:1023px;top:344px;font-size:14px;color:#59636e;font-weight:400;line-height:20px;width:200px;text-align:right">2 个月之前</div>
<div class="b" style="left:345px;top:415px;width:894px;height:1px;background:#d1d9e0"></div>
<svg class="ic" style="left:361px;top:387px;width:16px;height:16px;fill:#54aeff;" viewBox="0 0 16 16"><path d="M.513 1.513A1.750 1.750 0 0 1 1.750 1h3.500c.550 0 1.070.259 1.400.700l.900 1.200a.25.25 0 0 0 .200.100H14.250c.966 0 1.750.784 1.750 1.750v8.500A1.750 1.750 0 0 1 14.250 15H1.750A1.750 1.750 0 0 1 0 13.250V2.750c0-.464.184-.910.513-1.237Z"/></svg>
<div class="t" style="left:386px;top:385px;font-size:14px;color:#1f2328;font-weight:400;line-height:20px">source</div>
<div class="t" style="left:718px;top:385px;font-size:14px;color:#59636e;font-weight:400;line-height:20px">新地图</div>
<div class="t" style="left:1023px;top:385px;font-size:14px;color:#59636e;font-weight:400;line-height:20px;width:200px;text-align:right">1 小时之前</div>
<div class="b" style="left:345px;top:456px;width:894px;height:1px;background:#d1d9e0"></div>
<svg class="ic" style="left:361px;top:428px;width:16px;height:16px;fill:#59636e;" viewBox="0 0 16 16"><path d="M2 1.750C2 .784 2.784 0 3.750 0h6.586c.464 0 .909.184 1.237.513l2.914 2.914c.329.328.513.773.513 1.237v9.586A1.750 1.750 0 0 1 13.250 16h-9.500A1.750 1.750 0 0 1 2 14.250Zm1.750-.250a.25.25 0 0 0-.25.25v12.500c0 .138.112.25.25.25h9.500a.25.25 0 0 0 .25-.25V6h-2.750A1.750 1.750 0 0 1 9 4.250V1.500Zm6.750.062V4.250c0 .138.112.250.250.250h2.688l-.011-.013-2.914-2.914-.013-.011Z"/></svg>
<div class="t" style="left:386px;top:426px;font-size:14px;color:#1f2328;font-weight:400;line-height:20px">.gitignore</div>
<div class="t" style="left:718px;top:426px;font-size:14px;color:#59636e;font-weight:400;line-height:20px">my blog first commit</div>
<div class="t" style="left:1023px;top:426px;font-size:14px;color:#59636e;font-weight:400;line-height:20px;width:200px;text-align:right">2 个月之前</div>
<div class="b" style="left:345px;top:497px;width:894px;height:1px;background:#d1d9e0"></div>
<svg class="ic" style="left:361px;top:469px;width:16px;height:16px;fill:#59636e;" viewBox="0 0 16 16"><path d="M2 1.750C2 .784 2.784 0 3.750 0h6.586c.464 0 .909.184 1.237.513l2.914 2.914c.329.328.513.773.513 1.237v9.586A1.750 1.750 0 0 1 13.250 16h-9.500A1.750 1.750 0 0 1 2 14.250Zm1.750-.250a.25.25 0 0 0-.25.25v12.500c0 .138.112.25.25.25h9.500a.25.25 0 0 0 .25-.25V6h-2.750A1.750 1.750 0 0 1 9 4.250V1.500Zm6.750.062V4.250c0 .138.112.250.250.250h2.688l-.011-.013-2.914-2.914-.013-.011Z"/></svg>
<div class="t" style="left:386px;top:467px;font-size:14px;color:#1f2328;font-weight:400;line-height:20px">_config.anzhiyu.yml</div>
<div class="t" style="left:718px;top:467px;font-size:14px;color:#59636e;font-weight:400;line-height:20px">刷新一下</div>
<div class="t" style="left:1023px;top:467px;font-size:14px;color:#59636e;font-weight:400;line-height:20px;width:200px;text-align:right">2 天之前</div>
<div class="b" style="left:345px;top:538px;width:894px;height:1px;background:#d1d9e0"></div>
<svg class="ic" style="left:361px;top:510px;width:16px;height:16px;fill:#59636e;" viewBox="0 0 16 16"><path d="M2 1.750C2 .784 2.784 0 3.750 0h6.586c.464 0 .909.184 1.237.513l2.914 2.914c.329.328.513.773.513 1.237v9.586A1.750 1.750 0 0 1 13.250 16h-9.500A1.750 1.750 0 0 1 2 14.250Zm1.750-.250a.25.25 0 0 0-.25.25v12.500c0 .138.112.25.25.25h9.500a.25.25 0 0 0 .25-.25V6h-2.750A1.750 1.750 0 0 1 9 4.250V1.500Zm6.750.062V4.250c0 .138.112.250.250.250h2.688l-.011-.013-2.914-2.914-.013-.011Z"/></svg>
<div class="t" style="left:386px;top:508px;font-size:14px;color:#1f2328;font-weight:400;line-height:20px">_config.butterfly.yml</div>
<div class="t" style="left:718px;top:508px;font-size:14px;color:#59636e;font-weight:400;line-height:20px">页脚增加Netlify</div>
<div class="t" style="left:1023px;top:508px;font-size:14px;color:#59636e;font-weight:400;line-height:20px;width:200px;text-align:right">2 天之前</div>
<div class="b" style="left:345px;top:579px;width:894px;height:1px;background:#d1d9e0"></div>
<svg class="ic" style="left:361px;top:551px;width:16px;height:16px;fill:#59636e;" viewBox="0 0 16 16"><path d="M2 1.750C2 .784 2.784 0 3.750 0h6.586c.464 0 .909.184 1.237.513l2.914 2.914c.329.328.513.773.513 1.237v9.586A1.750 1.750 0 0 1 13.250 16h-9.500A1.750 1.750 0 0 1 2 14.250Zm1.750-.250a.25.25 0 0 0-.25.25v12.500c0 .138.112.25.25.25h9.500a.25.25 0 0 0 .25-.25V6h-2.750A1.750 1.750 0 0 1 9 4.250V1.500Zm6.750.062V4.250c0 .138.112.250.250.250h2.688l-.011-.013-2.914-2.914-.013-.011Z"/></svg>
<div class="t" style="left:386px;top:549px;font-size:14px;color:#1f2328;font-weight:400;line-height:20px">_config.yml</div>
<div class="t" style="left:718px;top:549px;font-size:14px;color:#59636e;font-weight:400;line-height:20px">每页展示增加两个</div>
<div class="t" style="left:1023px;top:549px;font-size:14px;color:#59636e;font-weight:400;line-height:20px;width:200px;text-align:right">2 周之前</div>
<div class="b" style="left:345px;top:620px;width:894px;height:1px;background:#d1d9e0"></div>
<svg class="ic" style="left:361px;top:592px;width:16px;height:16px;fill:#59636e;" viewBox="0 0 16 16"><path d="M2 1.750C2 .784 2.784 0 3.750 0h6.586c.464 0 .909.184 1.237.513l2.914 2.914c.329.328.513.773.513 1.237v9.586A1.750 1.750 0 0 1 13.250 16h-9.500A1.750 1.750 0 0 1 2 14.250Zm1.750-.250a.25.25 0 0 0-.25.25v12.500c0 .138.112.25.25.25h9.500a.25.25 0 0 0 .25-.25V6h-2.750A1.750 1.750 0 0 1 9 4.250V1.500Zm6.750.062V4.250c0 .138.112.250.250.250h2.688l-.011-.013-2.914-2.914-.013-.011Z"/></svg>
<div class="t" style="left:386px;top:590px;font-size:14px;color:#1f2328;font-weight:400;line-height:20px">package-lock.json</div>
<div class="t" style="left:718px;top:590px;font-size:14px;color:#59636e;font-weight:400;line-height:20px">纠正袁莎莎老师的校区划分</div>
<div class="t" style="left:1023px;top:590px;font-size:14px;color:#59636e;font-weight:400;line-height:20px;width:200px;text-align:right">上周</div>
<div class="b" style="left:345px;top:661px;width:894px;height:1px;background:#d1d9e0"></div>
<svg class="ic" style="left:361px;top:633px;width:16px;height:16px;fill:#59636e;" viewBox="0 0 16 16"><path d="M2 1.750C2 .784 2.784 0 3.750 0h6.586c.464 0 .909.184 1.237.513l2.914 2.914c.329.328.513.773.513 1.237v9.586A1.750 1.750 0 0 1 13.250 16h-9.500A1.750 1.750 0 0 1 2 14.250Zm1.750-.250a.25.25 0 0 0-.25.25v12.500c0 .138.112.25.25.25h9.500a.25.25 0 0 0 .25-.25V6h-2.750A1.750 1.750 0 0 1 9 4.250V1.500Zm6.750.062V4.250c0 .138.112.250.250.250h2.688l-.011-.013-2.914-2.914-.013-.011Z"/></svg>
<div class="t" style="left:386px;top:631px;font-size:14px;color:#1f2328;font-weight:400;line-height:20px">package.json</div>
<div class="t" style="left:718px;top:631px;font-size:14px;color:#59636e;font-weight:400;line-height:20px">Update package.json</div>
<div class="t" style="left:1023px;top:631px;font-size:14px;color:#59636e;font-weight:400;line-height:20px;width:200px;text-align:right">3 天之前</div>
<div class="b" style="left:345px;top:702px;width:894px;height:1px;background:#d1d9e0"></div>
<svg class="ic" style="left:361px;top:674px;width:16px;height:16px;fill:#59636e;" viewBox="0 0 16 16"><path d="M2 1.750C2 .784 2.784 0 3.750 0h6.586c.464 0 .909.184 1.237.513l2.914 2.914c.329.328.513.773.513 1.237v9.586A1.750 1.750 0 0 1 13.250 16h-9.500A1.750 1.750 0 0 1 2 14.250Zm1.750-.250a.25.25 0 0 0-.25.25v12.500c0 .138.112.25.25.25h9.500a.25.25 0 0 0 .25-.25V6h-2.750A1.750 1.750 0 0 1 9 4.250V1.500Zm6.750.062V4.250c0 .138.112.250.250.250h2.688l-.011-.013-2.914-2.914-.013-.011Z"/></svg>
<div class="t" style="left:386px;top:672px;font-size:14px;color:#1f2328;font-weight:400;line-height:20px">一键git pull.sh</div>
<div class="t" style="left:718px;top:672px;font-size:14px;color:#59636e;font-weight:400;line-height:20px">deploy from hexo-admin</div>
<div class="t" style="left:1023px;top:672px;font-size:14px;color:#59636e;font-weight:400;line-height:20px;width:200px;text-align:right">上个月</div>
<div class="b" style="left:345px;top:743px;width:894px;height:1px;background:#d1d9e0"></div>
<svg class="ic" style="left:361px;top:715px;width:16px;height:16px;fill:#59636e;" viewBox="0 0 16 16"><path d="M2 1.750C2 .784 2.784 0 3.750 0h6.586c.464 0 .909.184 1.237.513l2.914 2.914c.329.328.513.773.513 1.237v9.586A1.750 1.750 0 0 1 13.250 16h-9.500A1.750 1.750 0 0 1 2 14.250Zm1.750-.250a.25.25 0 0 0-.25.25v12.500c0 .138.112.25.25.25h9.500a.25.25 0 0 0 .25-.25V6h-2.750A1.750 1.750 0 0 1 9 4.250V1.500Zm6.750.062V4.250c0 .138.112.250.250.250h2.688l-.011-.013-2.914-2.914-.013-.011Z"/></svg>
<div class="t" style="left:386px;top:713px;font-size:14px;color:#1f2328;font-weight:400;line-height:20px">一键git push.sh</div>
<div class="t" style="left:718px;top:713px;font-size:14px;color:#59636e;font-weight:400;line-height:20px">deploy from hexo-admin</div>
<div class="t" style="left:1023px;top:713px;font-size:14px;color:#59636e;font-weight:400;line-height:20px;width:200px;text-align:right">2 个月之前</div>
<div class="b" style="left:345px;top:784px;width:894px;height:1px;background:#d1d9e0"></div>
<svg class="ic" style="left:361px;top:756px;width:16px;height:16px;fill:#59636e;" viewBox="0 0 16 16"><path d="M2 1.750C2 .784 2.784 0 3.750 0h6.586c.464 0 .909.184 1.237.513l2.914 2.914c.329.328.513.773.513 1.237v9.586A1.750 1.750 0 0 1 13.250 16h-9.500A1.750 1.750 0 0 1 2 14.250Zm1.750-.250a.25.25 0 0 0-.25.25v12.500c0 .138.112.25.25.25h9.500a.25.25 0 0 0 .25-.25V6h-2.750A1.750 1.750 0 0 1 9 4.250V1.500Zm6.750.062V4.250c0 .138.112.250.250.250h2.688l-.011-.013-2.914-2.914-.013-.011Z"/></svg>
<div class="t" style="left:386px;top:754px;font-size:14px;color:#1f2328;font-weight:400;line-height:20px">一键卸载加密插件.sh</div>
<div class="t" style="left:718px;top:754px;font-size:14px;color:#59636e;font-weight:400;line-height:20px">deploy from hexo-admin</div>
<div class="t" style="left:1023px;top:754px;font-size:14px;color:#59636e;font-weight:400;line-height:20px;width:200px;text-align:right">上个月</div>
<div class="b" style="left:345px;top:825px;width:894px;height:1px;background:#d1d9e0"></div>
<svg class="ic" style="left:361px;top:797px;width:16px;height:16px;fill:#59636e;" viewBox="0 0 16 16"><path d="M2 1.750C2 .784 2.784 0 3.750 0h6.586c.464 0 .909.184 1.237.513l2.914 2.914c.329.328.513.773.513 1.237v9.586A1.750 1.750 0 0 1 13.250 16h-9.500A1.750 1.750 0 0 1 2 14.250Zm1.750-.250a.25.25 0 0 0-.25.25v12.500c0 .138.112.25.25.25h9.500a.25.25 0 0 0 .25-.25V6h-2.750A1.750 1.750 0 0 1 9 4.250V1.500Zm6.750.062V4.250c0 .138.112.250.250.250h2.688l-.011-.013-2.914-2.914-.013-.011Z"/></svg>
<div class="t" style="left:386px;top:795px;font-size:14px;color:#1f2328;font-weight:400;line-height:20px">一键原始人上传.sh</div>
<div class="t" style="left:718px;top:795px;font-size:14px;color:#59636e;font-weight:400;line-height:20px">deploy from hexo-admin</div>
<div class="t" style="left:1023px;top:795px;font-size:14px;color:#59636e;font-weight:400;line-height:20px;width:200px;text-align:right">上个月</div>
<div class="b" style="left:345px;top:866px;width:894px;height:1px;background:#d1d9e0"></div>
<svg class="ic" style="left:361px;top:838px;width:16px;height:16px;fill:#59636e;" viewBox="0 0 16 16"><path d="M2 1.750C2 .784 2.784 0 3.750 0h6.586c.464 0 .909.184 1.237.513l2.914 2.914c.329.328.513.773.513 1.237v9.586A1.750 1.750 0 0 1 13.250 16h-9.500A1.750 1.750 0 0 1 2 14.250Zm1.750-.250a.25.25 0 0 0-.25.25v12.500c0 .138.112.25.25.25h9.500a.25.25 0 0 0 .25-.25V6h-2.750A1.750 1.750 0 0 1 9 4.250V1.500Zm6.750.062V4.250c0 .138.112.250.250.250h2.688l-.011-.013-2.914-2.914-.013-.011Z"/></svg>
<div class="t" style="left:386px;top:836px;font-size:14px;color:#1f2328;font-weight:400;line-height:20px">一键启动集成命令.sh</div>
<div class="t" style="left:718px;top:836px;font-size:14px;color:#59636e;font-weight:400;line-height:20px">deploy from hexo-admin</div>
<div class="t" style="left:1023px;top:836px;font-size:14px;color:#59636e;font-weight:400;line-height:20px;width:200px;text-align:right">2 个月之前</div>
<div class="b" style="left:345px;top:907px;width:894px;height:1px;background:#d1d9e0"></div>
<svg class="ic" style="left:361px;top:879px;width:16px;height:16px;fill:#59636e;" viewBox="0 0 16 16"><path d="M2 1.750C2 .784 2.784 0 3.750 0h6.586c.464 0 .909.184 1.237.513l2.914 2.914c.329.328.513.773.513 1.237v9.586A1.750 1.750 0 0 1 13.250 16h-9.500A1.750 1.750 0 0 1 2 14.250Zm1.750-.250a.25.25 0 0 0-.25.25v12.500c0 .138.112.25.25.25h9.500a.25.25 0 0 0 .25-.25V6h-2.750A1.750 1.750 0 0 1 9 4.250V1.500Zm6.750.062V4.250c0 .138.112.250.250.250h2.688l-.011-.013-2.914-2.914-.013-.011Z"/></svg>
<div class="t" style="left:386px;top:877px;font-size:14px;color:#1f2328;font-weight:400;line-height:20px">一键安装anzhiyu主题.sh</div>
<div class="t" style="left:718px;top:877px;font-size:14px;color:#59636e;font-weight:400;line-height:20px">deploy from hexo-admin</div>
<div class="t" style="left:1023px;top:877px;font-size:14px;color:#59636e;font-weight:400;line-height:20px;width:200px;text-align:right">上个月</div>
<div class="b" style="left:345px;top:948px;width:894px;height:1px;background:#d1d9e0"></div>
<svg class="ic" style="left:361px;top:920px;width:16px;height:16px;fill:#59636e;" viewBox="0 0 16 16"><path d="M2 1.750C2 .784 2.784 0 3.750 0h6.586c.464 0 .909.184 1.237.513l2.914 2.914c.329.328.513.773.513 1.237v9.586A1.750 1.750 0 0 1 13.250 16h-9.500A1.750 1.750 0 0 1 2 14.250Zm1.750-.250a.25.25 0 0 0-.25.25v12.500c0 .138.112.25.25.25h9.500a.25.25 0 0 0 .25-.25V6h-2.750A1.750 1.750 0 0 1 9 4.250V1.500Zm6.750.062V4.250c0 .138.112.250.250.250h2.688l-.011-.013-2.914-2.914-.013-.011Z"/></svg>
<div class="t" style="left:386px;top:918px;font-size:14px;color:#1f2328;font-weight:400;line-height:20px">一键安装butterfly主题.sh</div>
<div class="t" style="left:718px;top:918px;font-size:14px;color:#59636e;font-weight:400;line-height:20px">deploy from hexo-admin</div>
<div class="t" style="left:1023px;top:918px;font-size:14px;color:#59636e;font-weight:400;line-height:20px;width:200px;text-align:right">上个月</div>
<div class="t" style="left:1263px;top:195px;font-size:16px;color:#1f2328;font-weight:600;line-height:24px">关于</div>
<svg class="ic" style="left:1544px;top:199px;width:16px;height:16px;fill:#59636e;" viewBox="0 0 16 16"><path d="M8 0a8.2 8.2 0 0 1 .701.031C9.444.095 9.99.645 10.16 1.29l.288 1.107c.018.066.079.158.212.224.231.114.454.243.668.386.123.082.233.09.299.071l1.103-.303c.644-.176 1.392.021 1.82.63.27.385.506.792.704 1.218.315.675.111 1.422-.364 1.891l-.814.806c-.049.048-.098.147-.088.294.016.257.016.515 0 .772-.01.147.038.246.088.294l.814.806c.475.469.679 1.216.364 1.891a7.977 7.977 0 0 1-.704 1.217c-.428.61-1.176.807-1.82.63l-1.102-.302c-.067-.019-.177-.011-.3.071a5.909 5.909 0 0 1-.668.386c-.133.066-.194.158-.211.224l-.29 1.106c-.168.646-.715 1.196-1.458 1.26a8.006 8.006 0 0 1-1.402 0c-.743-.064-1.289-.614-1.458-1.26l-.289-1.106c-.018-.066-.079-.158-.212-.224a5.738 5.738 0 0 1-.668-.386c-.123-.082-.233-.09-.299-.071l-1.103.303c-.644.176-1.392-.021-1.82-.63a8.12 8.120 0 0 1-.704-1.218c-.315-.675-.111-1.422.363-1.891l.815-.806c.05-.048.098-.147.088-.294a6.214 6.214 0 0 1 0-.772c.01-.147-.038-.246-.088-.294l-.815-.806C.635 6.045.431 5.298.746 4.623a7.92 7.92 0 0 1 .704-1.217c.428-.61 1.176-.807 1.82-.63l1.102.302c.067.019.177.011.3-.071.214-.143.437-.272.668-.386.133-.066.194-.158.211-.224l.29-1.106C6.009.645 6.556.095 7.299.03 7.53.01 7.764 0 8 0Zm-.571 1.525c-.036.003-.108.036-.137.146l-.289 1.105c-.147.561-.549.967-.998 1.189-.173.086-.34.183-.5.29-.417.278-.97.423-1.529.27l-1.103-.303c-.109-.03-.175.016-.195.045-.22.312-.412.644-.573.99-.014.031-.021.11.059.19l.815.806c.411.406.562.957.53 1.456a4.709 4.709 0 0 0 0 .582c.032.499-.119 1.05-.53 1.456l-.815.806c-.081.08-.073.159-.059.19.162.346.353.677.573.989.02.03.085.076.195.046l1.102-.303c.56-.153 1.113-.008 1.53.27.161.107.328.204.501.29.447.222.85.629.997 1.189l.289 1.105c.029.109.101.143.137.146a6.6 6.6 0 0 0 1.142 0c.036-.003.108-.036.137-.146l.289-1.105c.147-.561.549-.967.998-1.189.173-.086.34-.183.5-.29.417-.278.97-.423 1.529-.27l1.103.303c.109.029.175-.016.195-.045.22-.313.411-.644.573-.99.014-.031.021-.11-.059-.19l-.815-.806c-.411-.406-.562-.957-.53-1.456a4.709 4.709 0 0 0 0-.582c-.032-.499.119-1.05.53-1.456l.815-.806c.081-.08.073-.159.059-.19a6.464 6.464 0 0 0-.573-.989c-.02-.03-.085-.076-.195-.046l-1.102.303c-.56.153-1.113.008-1.53-.27a4.44 4.44 0 0 0-.501-.29c-.447-.222-.85-.629-.997-1.189l-.289-1.105c-.029-.11-.101-.143-.137-.146a6.6 6.6 0 0 0-1.142 0ZM11 8a3 3 0 1 1-6 0 3 3 0 0 1 6 0ZM9.5 8a1.5 1.5 0 1 0-3.001.001A1.5 1.5 0 0 0 9.5 8Z"/></svg>
<div class="t" style="left:1264px;top:236px;font-size:16px;color:#1f2328;font-weight:400;line-height:24px">blog总仓库</div>
<div class="t" style="left:1264px;top:275px;font-size:13px;color:#3c94ec;font-weight:400;line-height:20px">翻译</div>
<svg class="ic" style="left:1264px;top:314px;width:16px;height:16px;fill:#1f2328;" viewBox="0 0 16 16"><path d="m7.775 3.275 1.250-1.250a3.500 3.500 0 1 1 4.950 4.950l-2.500 2.500a3.500 3.500 0 0 1-4.950 0 .751.751 0 0 1 .018-1.042.751.751 0 0 1 1.042-.018 1.998 1.998 0 0 0 2.830 0l2.500-2.500a2.002 2.002 0 0 0-2.830-2.830l-1.250 1.250a.751.751 0 0 1-1.042-.018.751.751 0 0 1-.018-1.042Zm-4.690 9.640a1.998 1.998 0 0 0 2.830 0l1.250-1.250a.751.751 0 0 1 1.042.018.751.751 0 0 1 .018 1.042l-1.250 1.250a3.500 3.500 0 1 1-4.950-4.950l2.500-2.500a3.500 3.500 0 0 1 4.950 0 .751.751 0 0 1-.018 1.042.751.751 0 0 1-1.042.018 1.998 1.998 0 0 0-2.830 0l-2.500 2.500a1.998 1.998 0 0 0 0 2.830Z"/></svg>
<div class="t" style="left:1288px;top:311px;font-size:14px;color:#0969da;font-weight:400;line-height:20px;-webkit-text-stroke:0.35px #0969da">blog.w1ndys.top</div>
<svg class="ic" style="left:1264px;top:351px;width:16px;height:16px;fill:#59636e;" viewBox="0 0 16 16"><path d="M6 2c.306 0 .582.187.696.471L10 10.731l1.304-3.260A.751.751 0 0 1 12 7h3.250a.75.75 0 0 1 0 1.500h-2.742l-1.812 4.528a.751.751 0 0 1-1.392 0L6 4.770 4.696 8.030A.75.75 0 0 1 4 8.500H.750a.75.75 0 0 1 0-1.500h2.742l1.812-4.529A.751.751 0 0 1 6 2Z"/></svg>
<div class="t" style="left:1292px;top:348px;font-size:14px;color:#59636e;font-weight:400;line-height:20px">活动</div>
<svg class="ic" style="left:1264px;top:380px;width:16px;height:16px;fill:#59636e;" viewBox="0 0 16 16"><path d="M8 .25a.75.75 0 0 1 .673.418l1.882 3.815 4.210.612a.75.75 0 0 1 .416 1.279l-3.046 2.970.719 4.192a.751.751 0 0 1-1.088.791L8 12.347l-3.766 1.980a.75.75 0 0 1-1.088-.79l.72-4.194L.818 6.374a.75.75 0 0 1 .416-1.280l4.210-.611L7.327.668A.75.75 0 0 1 8 .25Zm0 2.445L6.615 5.500a.75.75 0 0 1-.564.410l-3.097.450 2.240 2.184a.75.75 0 0 1 .216.664l-.528 3.084 2.769-1.456a.75.75 0 0 1 .698 0l2.770 1.456-.530-3.084a.75.75 0 0 1 .216-.664l2.240-2.183-3.096-.450a.75.75 0 0 1-.564-.410L8 2.694Z"/></svg>
<div class="t" style="left:1291px;top:377px;font-size:14px;color:#59636e;font-weight:400;line-height:20px">0 星标</div>
<svg class="ic" style="left:1264px;top:409px;width:16px;height:16px;fill:#59636e;" viewBox="0 0 16 16"><path d="M8 2c1.981 0 3.671.992 4.933 2.078 1.270 1.091 2.187 2.345 2.637 3.023a1.620 1.620 0 0 1 0 1.798c-.45.678-1.367 1.932-2.637 3.023C11.670 13.008 9.981 14 8 14c-1.981 0-3.671-.992-4.933-2.078C1.797 10.830.880 9.576.430 8.898a1.620 1.620 0 0 1 0-1.798c.45-.677 1.367-1.931 2.637-3.022C4.330 2.992 6.019 2 8 2ZM1.679 7.932a.12.12 0 0 0 0 .136c.411.622 1.241 1.750 2.366 2.717C5.176 11.758 6.527 12.500 8 12.500c1.473 0 2.825-.742 3.955-1.715 1.124-.967 1.954-2.096 2.366-2.717a.12.12 0 0 0 0-.136c-.412-.621-1.242-1.750-2.366-2.717C10.824 4.242 9.473 3.500 8 3.500c-1.473 0-2.825.742-3.955 1.715-1.124.967-1.954 2.096-2.366 2.717ZM8 10a2 2 0 1 1-.001-3.999A2 2 0 0 1 8 10Z"/></svg>
<div class="t" style="left:1291px;top:406px;font-size:14px;color:#59636e;font-weight:400;line-height:20px">1 关注</div>
<svg class="ic" style="left:1264px;top:439px;width:16px;height:16px;fill:#59636e;" viewBox="0 0 16 16"><path d="M5 5.372v.878c0 .414.336.75.75.75h4.5a.75.75 0 0 0 .75-.75v-.878a2.25 2.25 0 1 1 1.5 0v.878a2.25 2.25 0 0 1-2.25 2.25h-1.5v2.128a2.251 2.251 0 1 1-1.5 0V8.500h-1.5A2.25 2.25 0 0 1 3.500 6.250v-.878a2.250 2.250 0 1 1 1.500 0ZM5 3.250a.75.75 0 1 0-1.500 0 .75.75 0 0 0 1.500 0Zm6.750.750a.75.75 0 1 0 0-1.500.75.75 0 0 0 0 1.500Zm-3 8.750a.75.75 0 1 0-1.500 0 .75.75 0 0 0 1.500 0Z"/></svg>
<div class="t" style="left:1291px;top:435px;font-size:14px;color:#59636e;font-weight:400;line-height:20px">0 复刻</div>
<div class="b" style="left:1264px;top:472px;width:296px;height:1px;background:#d1d9e0"></div>
<div class="t" style="left:1263px;top:488px;font-size:16px;color:#1f2328;font-weight:600;line-height:24px">发行版</div>
<div class="t" style="left:1264px;top:529px;font-size:12px;color:#59636e;font-weight:400;line-height:18px">未发布任何版本</div>
<div class="t" style="left:1264px;top:547px;font-size:12px;color:#0969da;font-weight:400;line-height:18px;text-decoration:underline">创建发行版</div>
<div class="b" style="left:1264px;top:581px;width:296px;height:1px;background:#d1d9e0"></div>
<div class="t" style="left:1263px;top:598px;font-size:16px;color:#1f2328;font-weight:600;line-height:24px">软件包</div>
<div class="t" style="left:1264px;top:638px;font-size:12px;color:#59636e;font-weight:400;line-height:18px">未发布软件包</div>
<div class="t" style="left:1264px;top:656px;font-size:12px;color:#0969da;font-weight:400;line-height:18px">发布软件包</div>
<div class="b" style="left:1264px;top:690px;width:296px;height:1px;background:#d1d9e0"></div>
<div class="t" style="left:1263px;top:707px;font-size:16px;color:#1f2328;font-weight:600;line-height:24px">部署</div>
<div class="b" style="left:1264px;top:763px;width:296px;height:1px;background:#d1d9e0"></div>
<div class="t" style="left:1263px;top:780px;font-size:16px;color:#1f2328;font-weight:600;line-height:24px">语言</div>
<div class="b" style="left:1264px;top:820px;width:296px;height:8px;border-radius:6px;overflow:hidden;background:#fff"></div>
<div class="b" style="left:1264px;top:820px;width:139px;height:8px;background:#89e051;border-radius:6px 0 0 6px;"></div>
<div class="b" style="left:1405px;top:820px;width:94px;height:8px;background:#e34c26;"></div>
<div class="b" style="left:1501px;top:820px;width:23px;height:8px;background:#f1e05a;"></div>
<div class="b" style="left:1526px;top:820px;width:20px;height:8px;background:#3572A5;"></div>
<div class="b" style="left:1548px;top:820px;width:12px;height:8px;background:#563d7c;border-radius:0 6px 6px 0;"></div>
<div class="b" style="left:1268px;top:841px;width:8px;height:8px;background:#89e051;border-radius:50%"></div>
<div class="t" style="left:1288px;top:836px;font-size:12px;line-height:18px;color:#1f2328;font-weight:400;-webkit-text-stroke:0.3px #1f2328">Shell <span style="font-weight:400;color:#59636e;-webkit-text-stroke:0">48.4%</span></div>
<div class="b" style="left:1373px;top:841px;width:8px;height:8px;background:#e34c26;border-radius:50%"></div>
<div class="t" style="left:1394px;top:836px;font-size:12px;line-height:18px;color:#1f2328;font-weight:400;-webkit-text-stroke:0.3px #1f2328">HTML <span style="font-weight:400;color:#59636e;-webkit-text-stroke:0">32.6%</span></div>
<div class="b" style="left:1268px;top:863px;width:8px;height:8px;background:#f1e05a;border-radius:50%"></div>
<div class="t" style="left:1288px;top:858px;font-size:12px;line-height:18px;color:#1f2328;font-weight:400;-webkit-text-stroke:0.3px #1f2328">JavaScript <span style="font-weight:400;color:#59636e;-webkit-text-stroke:0">8.1%</span></div>
<div class="b" style="left:1395px;top:863px;width:8px;height:8px;background:#3572A5;border-radius:50%"></div>
<div class="t" style="left:1415px;top:858px;font-size:12px;line-height:18px;color:#1f2328;font-weight:400;-webkit-text-stroke:0.3px #1f2328">Python <span style="font-weight:400;color:#59636e;-webkit-text-stroke:0">6.8%</span></div>
<div class="b" style="left:1268px;top:885px;width:8px;height:8px;background:#563d7c;border-radius:50%"></div>
<div class="t" style="left:1288px;top:880px;font-size:12px;line-height:18px;color:#1f2328;font-weight:400;-webkit-text-stroke:0.3px #1f2328">CSS <span style="font-weight:400;color:#59636e;-webkit-text-stroke:0">4.1%</span></div>
<div class="b" style="left:1774px;top:106px;width:48px;height:48px;border-radius:50%;background:conic-gradient(from 0deg,#7ccbdc 0deg,#a6b0e2 50deg,#d6a4dc 85deg,#eca4cc 120deg,#eba6cc 190deg,#c0a6e4 240deg,#88bcde 290deg,#7ccbdc 360deg)"></div>
<div class="b" style="left:1778px;top:110px;width:40px;height:40px;border-radius:50%;background:#fff"></div>
<svg class="ic" style="left:1770px;top:102px;width:56px;height:56px" viewBox="0 0 56 56"><g stroke="#000" stroke-width="4.4" stroke-linecap="round" fill="none"><path d="M18.4 18.1L24.3 20.6"/><path d="M28.8 22.6L37.2 18.5"/><path d="M15.7 24.8L22.9 29.6"/><path d="M36.5 28.8L40.75 24.95"/><path d="M23.5 35.4L24.7 40.5"/><path d="M32.3 30.6L31.75 40.2"/></g></svg>
<div class="b" style="left:1882px;top:273px;width:31px;height:31px;border-radius:50%;background:linear-gradient(180deg,#7bbcf8 0,#7bbcf8 50%,#5a9ee0 50%,#6aaae6 100%)"></div>
<svg class="ic" style="left:1882px;top:273px;width:31px;height:31px" viewBox="1882 273 31 31"><g stroke="#fff" stroke-width="1.8" fill="none"><path d="M1894.4 285.3H1900.6V291.4H1894.4Z"/><circle cx="1891.5" cy="282.4" r="2.9"/><circle cx="1903.5" cy="282.4" r="2.9"/><circle cx="1891.5" cy="294.3" r="2.9"/><circle cx="1903.5" cy="294.3" r="2.9"/></g></svg>
<div class="b" style="left:1903px;top:0px;width:17px;height:911px;background:#f1f1f1"></div>
<div class="b" style="left:1905px;top:17px;width:13px;height:453px;background:#c1c1c1"></div>
<svg class="ic" style="left:1905px;top:3px;width:13px;height:10px" viewBox="0 0 13 10"><path d="M2.5 7.5 L6.5 3.5 L10.5 7.5Z" fill="#a3a3a3"/></svg>
<svg class="ic" style="left:1905px;top:897px;width:13px;height:10px" viewBox="0 0 13 10"><path d="M2.5 2.5 L6.5 6.5 L10.5 2.5Z" fill="#505050"/></svg>
</body></html>
